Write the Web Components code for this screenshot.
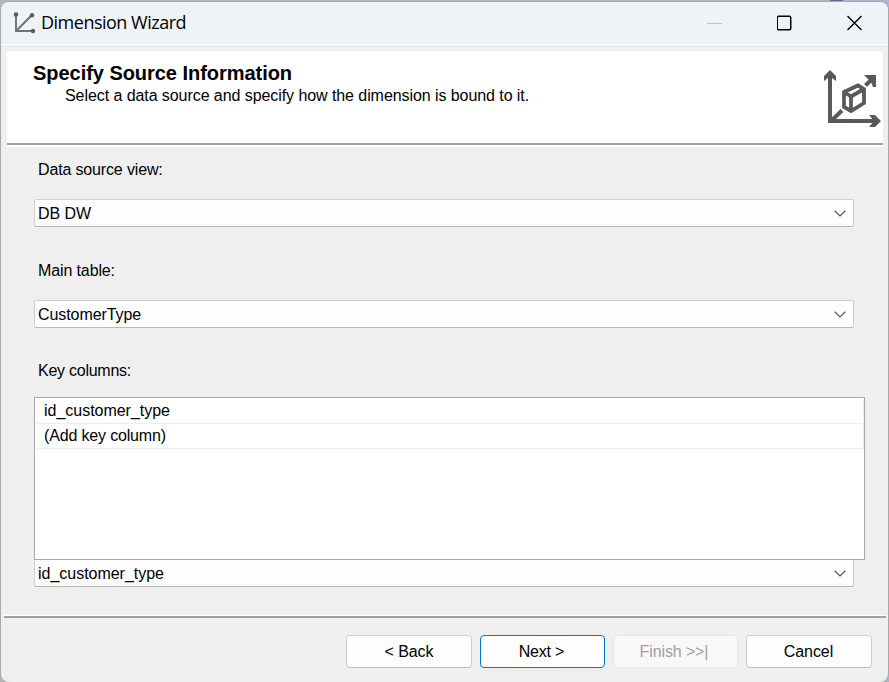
<!DOCTYPE html>
<html lang="en">
<head>
<meta charset="utf-8">
<title>Dimension Wizard</title>
<style>
html,body{margin:0;width:889px;height:682px;overflow:hidden}
body{background:linear-gradient(90deg,#b5b5b5 0 93.3%,#62678d 93.4% 94.8%,#adb2d0 94.900%);font-family:"Liberation Sans",Arial,sans-serif;font-size:16px;letter-spacing:-.07px;color:#000}
</style>
</head>
<body>
<wizard-window>
  <wizard-titlebar slot="title">Dimension Wizard</wizard-titlebar>
  <wizard-header slot="header">Specify Source Information<span slot="sub">Select a data source and specify how the dimension is bound to it.</span></wizard-header>
  <wizard-field label="Data source view:" style="--ls:-.15px"><wizard-combo>DB DW</wizard-combo></wizard-field>
  <wizard-field label="Main table:" style="--ls:-.12px"><wizard-combo>CustomerType</wizard-combo></wizard-field>
  <wizard-field label="Key columns:" style="--top:0px;--gap:16px;--ls:-.25px">
    <key-list><key-row style="letter-spacing:-.02px">id_customer_type</key-row><key-row style="letter-spacing:-.16px">(Add key column)</key-row></key-list>
    <wizard-combo attached style="letter-spacing:-.02px">id_customer_type</wizard-combo>
  </wizard-field>
  <wizard-button slot="actions" style="width:126px">&lt; Back</wizard-button>
  <wizard-button slot="actions" primary style="letter-spacing:-.2px;padding-right:2px">Next &gt;</wizard-button>
  <wizard-button slot="actions" disabled style="letter-spacing:-.12px;padding-right:3px">Finish &gt;&gt;|</wizard-button>
  <wizard-button slot="actions" style="width:126px;padding-right:1px">Cancel</wizard-button>
</wizard-window>
<script>
function define(name, html){
  const t=document.createElement('template');
  t.innerHTML='<style>*{box-sizing:border-box}:host{box-sizing:border-box}</style>'+html;
  customElements.define(name,class extends HTMLElement{
    constructor(){super();this.attachShadow({mode:'open'}).append(t.content.cloneNode(true));}
    connectedCallback(){const l=this.shadowRoot.querySelector('[data-label]');if(l)l.textContent=this.getAttribute('label');}
  });
}
define('wizard-window',`<style>
:host{display:flex;flex-direction:column;width:889px;height:682px;padding:2px 1px 0}
.win{display:flex;flex-direction:column;flex:1;width:887px;background:#efefef;border-radius:8px;overflow:hidden;box-shadow:0 0 0 1px #a9a9ac}
main{display:flex;flex-direction:column;height:468px;padding:12px 0 0 33px}
footer{display:flex;gap:8px;margin:1px 2px 0 3px;border-top:2px solid #a0a0a0;box-shadow:0 -1px #fff;padding:17px 14px 0 0;justify-content:flex-end;height:66px}
</style><div class="win"><slot name="title"></slot><slot name="header"></slot><main><slot></slot></main><footer><slot name="actions"></slot></footer></div>`);
define('wizard-titlebar',`<style>
:host{display:flex;align-items:center;height:43px;background:#eef3f8;border-bottom:1px solid #fff;padding:0 25px 1px 11px;font:18px/24px "Open Sans","Noto Sans",sans-serif;letter-spacing:-.5px}
.t{margin-left:5px;flex:1;padding-bottom:1px}
svg{display:block;flex:none}
.c{display:flex;align-items:center;gap:54px}
</style><svg width="24" height="24" viewBox="0 0 24 24" fill="none" stroke="#707070" stroke-width="1.900"><path d="M4 3v17h17M4 20 20 4"/><g fill="#5c5c5c" stroke="none"><circle cx="4" cy="3.500" r="2.2"/><circle cx="20" cy="4.200" r="2.2"/><circle cx="21" cy="20" r="2.2"/></g></svg>
<div class="t"><slot></slot></div>
<div class="c"><svg width="16" height="16"><path d="M0 8.500h15" stroke="#bfc3c8"/></svg><svg width="16" height="16"><rect x=".25" y="1.250" width="13.500" height="13.500" rx="1.500" fill="none" stroke="#000" stroke-width="1.500"/></svg><svg width="16" height="16"><path d="m.5 1 14 14M14.500 1 .5 15" stroke="#000" stroke-width="1.400"/></svg></div>`);
define('wizard-header',`<style>
:host{display:flex;justify-content:space-between;height:94px;margin:6px 5px 2px 6px;background:#fff;border-bottom:2px solid #a0a0a0;box-shadow:0 2px #fff;flex:none}
h1{margin:10px 0 0 26px;font-size:20px;line-height:24px;letter-spacing:-.04px}
p{margin:1px 0 0 58px;line-height:20px}
svg{display:block;margin:16px 1px 0 0}
</style><div><h1><slot></slot></h1><p><slot name="sub"></slot></p></div>
<svg width="60" height="62" viewBox="0 0 60 62" fill="none" stroke="#58595b" stroke-width="4"><path d="M8 7v47h46M9 54l11-10.500M43.500 18.500l8-8"/><g fill="#58595b" stroke="none"><path d="M8 3 14 9v5L8 9.500 2 14V9zM59 54l-6 6h-6l5-6-5-6h6zM42 8h12v12h-3l-2-5-5-5z"/></g><path d="M22 25 36 18.500 42 22v14L29 44l-7-4zM22 25l7 4.500V44M29 29.500 42 22" stroke-width="3.800"/></svg>`);
define('wizard-field',`<style>
:host{display:flex;flex-direction:column;align-items:flex-start;height:101px}
label{line-height:20px;margin:var(--top,1px) 0 var(--gap,19px) 4px;letter-spacing:var(--ls,0)}
</style><label data-label></label><slot></slot>`);
define('wizard-combo',`<style>
:host{display:flex;align-items:center;justify-content:space-between;width:820px;height:28px;background:#fdfdfd;border:1px solid #cfcfcf;border-bottom-color:#b9b9b9;border-radius:2px;padding:0 7px 0 3px;flex:none}
:host([attached]){border-top:0;height:27px;border-radius:0 0 2px 2px}
span{line-height:20px;padding-top:2px}
</style><span><slot></slot></span><svg width="12" height="7" fill="none" stroke="#555" stroke-width="1.200"><path d="m.7.8 5.300 5.200L11.300.8"/></svg>`);
define('key-list',`<style>
:host{display:block;width:831px;height:163px;background:#fff;border:1px solid #a5a7ac;padding:1px 0 0 1px;flex:none}
</style><slot></slot>`);
define('key-row',`<style>
:host{display:flex;align-items:center;width:828px;height:25px;border-bottom:1px solid #ededed;border-right:1px solid #ededed;padding-left:8px}
</style><slot></slot>`);
define('wizard-button',`<style>
:host{display:flex;align-items:center;justify-content:center;width:125px;height:33px;background:#fdfdfd;border:1px solid #d0d0d0;border-bottom-color:#bcbcbc;border-radius:4px;flex:none}
:host([primary]){border-color:#0078d4}
:host([disabled]){background:#f8f8f8;border-color:#e7e7e7;color:#a0a0a0}
</style><span><slot></slot></span>`);
</script>
</body>
</html>
